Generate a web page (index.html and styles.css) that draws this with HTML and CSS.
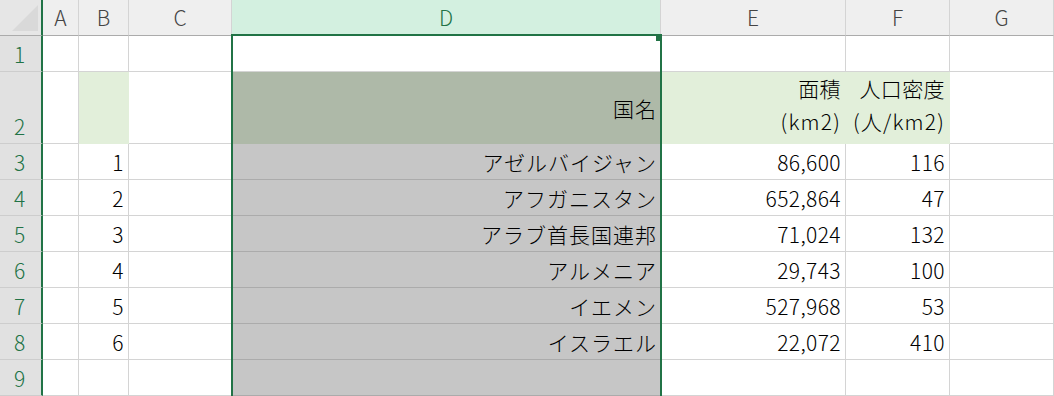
FILE: index.html
```html
<!DOCTYPE html>
<html lang="ja">
<head>
    <meta charset="UTF-8">
    <title>国名一覧</title>
    <link rel="stylesheet" href="styles.css">
</head>
<body>
    <div class="sheet">
        <!-- 列見出し -->
        <div class="corner">
            <svg viewBox="0 0 41 35" width="41" height="35"><polygon points="12,31 38,31 38,5" fill="#d9d9d9"/></svg>
        </div>
        <div class="col-head">A</div>
        <div class="col-head">B</div>
        <div class="col-head">C</div>
        <div class="col-head active">D</div>
        <div class="col-head">E</div>
        <div class="col-head">F</div>
        <div class="col-head">G</div>

        <!-- 1 -->
        <div class="row-head">1</div>
        <div class="cell"></div>
        <div class="cell"></div>
        <div class="cell"></div>
        <div class="cell"></div>
        <div class="cell"></div>
        <div class="cell"></div>
        <div class="cell"></div>

        <!-- 2 -->
        <div class="row-head tall">2</div>
        <div class="cell"></div>
        <div class="cell head-fill"></div>
        <div class="cell"></div>
        <div class="cell head-fill selected">国名</div>
        <div class="cell head-fill two-line"><span>面積</span><span>(km2)</span></div>
        <div class="cell head-fill two-line"><span>人口密度</span><span>(人/km2)</span></div>
        <div class="cell"></div>

        <!-- 3 -->
        <div class="row-head">3</div>
        <div class="cell"></div>
        <div class="cell">1</div>
        <div class="cell"></div>
        <div class="cell selected">アゼルバイジャン</div>
        <div class="cell">86,600</div>
        <div class="cell">116</div>
        <div class="cell"></div>

        <!-- 4 -->
        <div class="row-head">4</div>
        <div class="cell"></div>
        <div class="cell">2</div>
        <div class="cell"></div>
        <div class="cell selected">アフガニスタン</div>
        <div class="cell">652,864</div>
        <div class="cell">47</div>
        <div class="cell"></div>

        <!-- 5 -->
        <div class="row-head">5</div>
        <div class="cell"></div>
        <div class="cell">3</div>
        <div class="cell"></div>
        <div class="cell selected">アラブ首長国連邦</div>
        <div class="cell">71,024</div>
        <div class="cell">132</div>
        <div class="cell"></div>

        <!-- 6 -->
        <div class="row-head">6</div>
        <div class="cell"></div>
        <div class="cell">4</div>
        <div class="cell"></div>
        <div class="cell selected">アルメニア</div>
        <div class="cell">29,743</div>
        <div class="cell">100</div>
        <div class="cell"></div>

        <!-- 7 -->
        <div class="row-head">7</div>
        <div class="cell"></div>
        <div class="cell">5</div>
        <div class="cell"></div>
        <div class="cell selected">イエメン</div>
        <div class="cell">527,968</div>
        <div class="cell">53</div>
        <div class="cell"></div>

        <!-- 8 -->
        <div class="row-head">8</div>
        <div class="cell"></div>
        <div class="cell">6</div>
        <div class="cell"></div>
        <div class="cell selected">イスラエル</div>
        <div class="cell">22,072</div>
        <div class="cell">410</div>
        <div class="cell"></div>

        <!-- 9 -->
        <div class="row-head">9</div>
        <div class="cell"></div>
        <div class="cell"></div>
        <div class="cell"></div>
        <div class="cell selected"></div>
        <div class="cell"></div>
        <div class="cell"></div>
        <div class="cell"></div>

        <!-- 選択範囲の枠 -->
        <div class="selection">
            <div class="fill-handle"></div>
        </div>
    </div>
</body>
</html>
```

FILE: styles.css
```css
* {
    margin: 0;
    padding: 0;
    box-sizing: border-box;
}

body {
    font-family: "Noto Sans CJK JP", sans-serif;
    font-weight: 300;
    font-size: 21px;
    color: #000;
    background: #fff;
    overflow: hidden;
}

.sheet {
    position: relative;
    display: grid;
    grid-template-columns: 43px 36px 50px 103px 429px 185px 104px 1fr;
    grid-template-rows: 36px 36px 72px repeat(7, 36px);
    width: 1054px;
    height: 396px;
}

.corner {
    background: #e6e6e6;
    border-right: 2px solid #217346;
    border-bottom: 1px solid #ababab;
}

.corner svg {
    display: block;
}

.col-head {
    display: flex;
    align-items: center;
    justify-content: center;
    background: #efefef;
    color: #444;
    border-right: 1px solid #d4d4d4;
    border-bottom: 1px solid #ababab;
    padding-bottom: 2px;
}

.col-head.active {
    background: #d3f0e0;
    color: #217346;
}

.row-head {
    display: flex;
    align-items: center;
    justify-content: center;
    background: #e1e1e1;
    color: #217346;
    border-right: 2px solid #217346;
    border-bottom: 1px solid #cdcdcd;
    padding-right: 2px;
}

.row-head.tall {
    align-items: flex-end;
    padding-bottom: 2px;
}

.cell {
    display: flex;
    align-items: center;
    justify-content: flex-end;
    padding-right: 4px;
    border-right: 1px solid #d4d4d4;
    border-bottom: 1px solid #d4d4d4;
    white-space: nowrap;
    letter-spacing: 0.4px;
}

.cell.selected {
    background: #c6c6c6;
    border-bottom-color: #ababab;
    border-right-color: #fff;
    letter-spacing: 1px;
    padding-right: 3px;
}

.cell.head-fill {
    background: #e2efda;
    border-color: #e2efda;
}

.cell.head-fill.selected {
    background: #aeb9a8;
    border-bottom-color: #aeb9a8;
    border-right-color: #fff;
}

.two-line {
    flex-direction: column;
    align-items: flex-end;
    justify-content: center;
    line-height: 33px;
    padding-bottom: 6px;
}

.two-line span:last-child {
    letter-spacing: 1.2px;
}

.selection {
    position: absolute;
    left: 231px;
    top: 34px;
    width: 431px;
    height: 362px;
    border: 2px solid #217346;
    border-bottom: none;
    pointer-events: none;
}

.fill-handle {
    position: absolute;
    right: -2px;
    top: -1px;
    width: 6px;
    height: 6px;
    background: #217346;
}
```
